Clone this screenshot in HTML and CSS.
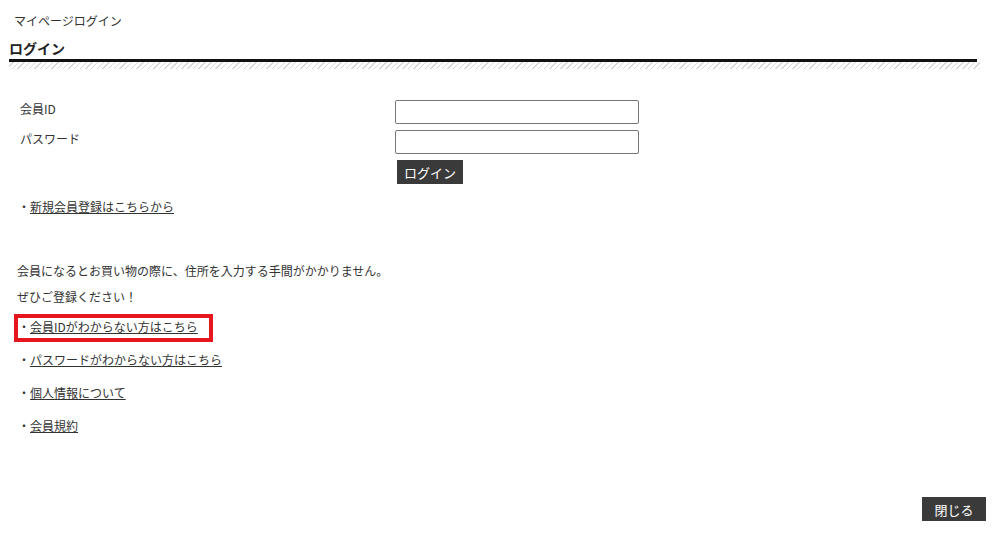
FILE: index.html
```html
<!DOCTYPE html>
<html lang="ja">
<head>
<meta charset="utf-8">
<title>マイページログイン</title>
<link rel="stylesheet" href="styles.css">
</head>
<body>
<div class="page">
  <p class="crumb">マイページログイン</p>
  <h1 class="title">ログイン</h1>
  <div class="hatch"></div>

  <form class="login">
    <label class="label" for="mid">会員ID</label>
    <input class="field" id="mid" type="text">
    <label class="label" for="mpw">パスワード</label>
    <input class="field" id="mpw" type="password">
    <span></span>
    <div><button class="btn btn-login" type="button">ログイン</button></div>
  </form>

  <p class="new-link">・<a href="#">新規会員登録はこちらから</a></p>

  <p class="lead">会員になるとお買い物の際に、住所を入力する手間がかかりません。<br>ぜひご登録ください！</p>

  <ul class="links">
    <li class="marked">・<a href="#">会員IDがわからない方はこちら</a></li>
    <li>・<a href="#">パスワードがわからない方はこちら</a></li>
    <li>・<a href="#">個人情報について</a></li>
    <li>・<a href="#">会員規約</a></li>
  </ul>

  <div class="close-row"><button class="btn btn-close" type="button">閉じる</button></div>
</div>
</body>
</html>
```

FILE: styles.css
```css
html, body {
  margin: 0;
  padding: 0;
  background: #fff;
}
body {
  font-family: "Noto Sans CJK JP", "Noto Sans", sans-serif;
  font-size: 12px;
  color: #333;
}
.page {
  padding-top: 11px;
}
.crumb {
  margin: 0 0 0 14px;
  line-height: 20px;
  font-size: 12px;
  color: #333;
}
.title {
  margin: 7px 23px 0 9px;
  font-size: 14px;
  font-weight: bold;
  line-height: 21px;
  color: #222;
  border-bottom: 3px solid #111;
}
.hatch {
  margin: 0 20px 0 9px;
  height: 7px;
  background: repeating-linear-gradient(-45deg, #d6d6d6 0 1px, #fff 1px 4px);
}
.login {
  margin: 31px 0 0 20px;
  display: grid;
  grid-template-columns: 375px 244px;
  row-gap: 6px;
}
.label {
  line-height: 18px;
  font-size: 12px;
  color: #333;
}
.field {
  box-sizing: border-box;
  width: 244px;
  height: 24px;
  margin: 0;
  border: 1px solid #767676;
  border-radius: 2px;
  background: #fff;
  font: inherit;
}
.btn {
  border: 0;
  margin: 0;
  padding: 0;
  background: #3a3a3a;
  color: #fff;
  font-family: inherit;
  font-size: 13px;
  cursor: pointer;
}
.btn-login {
  margin-left: 2px;
  width: 66px;
  height: 24px;
}
.new-link {
  margin: 13px 0 0 18px;
  line-height: 20px;
}
a {
  color: #333;
  text-decoration: underline;
}
.lead {
  margin: 41px 0 0 17px;
  line-height: 26px;
}
.links {
  list-style: none;
  margin: 7px 0 0 18px;
  padding: 0;
}
.links li {
  line-height: 20px;
  margin-bottom: 13px;
}
.links li:last-child {
  margin-bottom: 0;
}
.marked {
  position: relative;
}
.marked::after {
  content: "";
  position: absolute;
  left: -4px;
  top: -3px;
  width: 199px;
  height: 28px;
  box-sizing: border-box;
  border: 4px solid #e5161e;
  pointer-events: none;
}
.close-row {
  margin-top: 61px;
  display: flex;
  justify-content: flex-end;
  padding-right: 14px;
}
.btn-close {
  width: 64px;
  height: 24px;
}
```
